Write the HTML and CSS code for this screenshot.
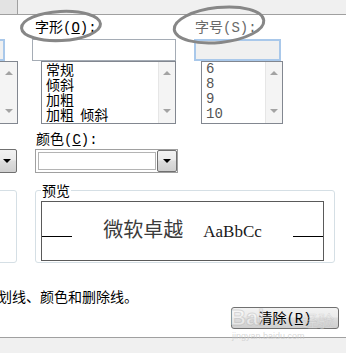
FILE: index.html
```html
<!DOCTYPE html>
<html lang="zh-CN">
<head>
    <meta charset="UTF-8">
    <title>字体</title>
    <link rel="stylesheet" href="styles.css">
</head>
<body>
    <div class="dialog">
        <div class="tabs"><div class="tab"></div></div>

        <div class="row labels">
            <span class="label style-label">字形<span class="key">(<u>O</u>):</span></span>
            <span class="label size-label">字号<span class="key">(S):</span></span>
        </div>

        <div class="row edits">
            <div class="edit edit-focus edit-cut"></div>
            <div class="edit edit-style"></div>
            <div class="edit edit-focus edit-size"></div>
        </div>

        <div class="row lists">
            <div class="list list-cut">
                <div class="scroll"><span class="arrow up"></span><span class="arrow down"></span></div>
            </div>
            <div class="list list-style">
                <ul class="items">
                    <li>常规</li>
                    <li>倾斜</li>
                    <li>加粗</li>
                    <li>加粗&nbsp;&nbsp;倾斜</li>
                </ul>
                <div class="scroll"><span class="arrow up"></span><span class="arrow down"></span></div>
            </div>
            <div class="list list-size">
                <ul class="items">
                    <li>6</li>
                    <li>8</li>
                    <li>9</li>
                    <li>10</li>
                </ul>
                <div class="scroll"><span class="arrow up"></span><span class="arrow down"></span></div>
            </div>
        </div>

        <div class="row color-row">
            <span class="label">颜色<span class="key">(<u>C</u>):</span></span>
        </div>

        <div class="row combos">
            <div class="combo combo-cut"><div class="drop"></div></div>
            <div class="combo combo-color"><div class="field"></div><div class="drop"></div></div>
        </div>

        <div class="row groups">
            <div class="group group-cut"></div>
            <fieldset class="group preview-group">
                <legend>预览</legend>
                <div class="preview">
                    <span class="rule"></span>
                    <span class="sample"><span class="sample-cn">微软卓越</span><span class="sample-en">AaBbCc</span></span>
                    <span class="rule"></span>
                </div>
            </fieldset>
        </div>

        <p class="note">划线、颜色和删除线。</p>

        <div class="row actions">
            <button class="btn">清除<span class="key">(<u>R</u>)</span></button>
            <div class="watermark">
                <span class="wm-big">Bai</span>
                <span class="wm-cn">经验</span>
                <span class="wm-url">jingyan.baidu.com</span>
            </div>
        </div>

        <div class="footer"></div>

        <!-- hand drawn marks over the two labels -->
        <svg class="marks" width="346" height="60" viewBox="0 0 346 60">
            <ellipse cx="61" cy="26" rx="39.5" ry="14.5" transform="rotate(-3 61 26)"/>
            <ellipse cx="219" cy="25" rx="45" ry="17.5" transform="rotate(-6 219 25)"/>
        </svg>
    </div>
</body>
</html>
```

FILE: styles.css
```css
body {
    margin: 0;
    background: #fff;
    font-family: "Noto Sans CJK SC", sans-serif;
    font-size: 14px;
    color: #000;
    overflow: hidden;
}
.dialog {
    position: relative;
    width: 346px;
    height: 353px;
    overflow: hidden;
}
.tabs {
    height: 14px;
    background: #f0f0f0;
    border-bottom: 1px solid #a0a0a0;
}
.tab {
    width: 17px;
    height: 14px;
    background: #e3e3e3;
    border-right: 1px solid #a0a0a0;
}
.row {
    display: flex;
}
.label {
    line-height: 18px;
    white-space: nowrap;
}
.key {
    font-family: "Liberation Mono", monospace;
}

/* labels */
.labels {
    height: 24px;
    align-items: center;
}
.style-label {
    margin-left: 35px;
    width: 160px;
}
.size-label {
    color: #6a6a6a;
}

/* edit boxes */
.edits {
    height: 22px;
}
.edit {
    box-sizing: border-box;
    height: 22px;
    border: 1px solid #a5acb5;
    background: #fff;
}
.edit-focus {
    border: 2px solid #a9c8ea;
    background: #f0f0f0;
}
.edit-cut {
    width: 5px;
    border-left: none;
}
.edit-style {
    margin-left: 27px;
    width: 144px;
}
.edit-size {
    margin-left: 18px;
    width: 87px;
}

/* list boxes */
.lists {
    height: 63px;
}
.list {
    box-sizing: border-box;
    height: 63px;
    display: flex;
    border: 1px solid #828790;
    background: #fff;
}
.list-cut {
    width: 18px;
    border-left: none;
}
.list-style {
    margin-left: 23px;
    width: 135px;
}
.list-size {
    margin-left: 25px;
    width: 82px;
}
.items {
    flex: 1;
    margin: 0;
    padding: 0 0 0 4px;
    list-style: none;
    line-height: 15px;
    white-space: nowrap;
}
.list-size .items {
    font-family: "Liberation Mono", monospace;
    color: #555;
}
.scroll {
    box-sizing: border-box;
    width: 17px;
    padding: 9px 0 10px;
    display: flex;
    flex-direction: column;
    justify-content: space-between;
    align-items: center;
    background: #f4f4f4;
    border-left: 1px solid #e6e6e6;
}
.list-cut .scroll {
    border-left: none;
}
.arrow {
    width: 0;
    height: 0;
    border-left: 4px solid transparent;
    border-right: 4px solid transparent;
}
.arrow.up {
    border-bottom: 4px solid #a3a3a3;
}
.arrow.down {
    border-top: 4px solid #a3a3a3;
}

/* colour */
.color-row {
    height: 25px;
    align-items: flex-end;
    padding-left: 36px;
}
.combos {
    height: 24px;
}
.combo {
    box-sizing: border-box;
    height: 24px;
    display: flex;
}
.combo-cut {
    width: 17px;
}
.combo-cut .drop {
    width: 20px;
    margin-left: -3px;
}
.combo-color {
    margin-left: 18px;
    width: 143px;
    border: 1px solid #a0a0a0;
    background: #fff;
}
.field {
    flex: 1;
    margin: 2px 1px 2px 2px;
    border: 1px solid #b4b4b4;
}
.drop {
    box-sizing: border-box;
    width: 20px;
    display: flex;
    align-items: center;
    justify-content: center;
    border: 1px solid #707070;
    border-radius: 2px;
    background: linear-gradient(#f2f2f2, #ebebeb 45%, #dddddd 50%, #cfcfcf);
}
.drop::after {
    content: "";
    border-left: 4px solid transparent;
    border-right: 4px solid transparent;
    border-top: 4px solid #000;
}

/* preview */
.groups {
    margin-top: 9px;
    align-items: flex-end;
}
.group {
    border: 1px solid #d5dfe5;
    border-radius: 3px;
}
.group-cut {
    box-sizing: border-box;
    width: 22px;
    height: 73px;
    margin-left: -5px;
}
.preview-group {
    margin: 0 0 0 18px;
    padding: 3px 10px 1px 5px;
    min-width: 0;
}
.preview-group legend {
    padding: 0 1px;
    line-height: 16px;
}
.preview {
    box-sizing: border-box;
    width: 283px;
    height: 60px;
    padding-top: 15px;
    display: flex;
    align-items: baseline;
    justify-content: space-between;
    border: 1px solid #5a5a5a;
}
.rule {
    width: 30px;
    height: 1px;
    background: #000;
}
.sample-cn {
    font-size: 20px;
    line-height: 24px;
    color: #3b3b3b;
}
.sample-en {
    margin-left: 20px;
    font-family: "Liberation Serif", serif;
    font-size: 17px;
    color: #1a1a1a;
}

.note {
    margin: 24px 0 0 -2px;
    line-height: 18px;
    white-space: nowrap;
}

/* button row */
.actions {
    position: relative;
    margin-top: 2px;
    justify-content: flex-end;
    padding-right: 7px;
}
.btn {
    width: 108px;
    height: 22px;
    padding: 0;
    font-family: inherit;
    font-size: 14px;
    line-height: 18px;
    color: #000;
    border: 1px solid #707070;
    border-radius: 3px;
    background: linear-gradient(#f2f2f2, #ebebeb 45%, #dddddd 50%, #cfcfcf);
}
.watermark {
    position: absolute;
    left: 230px;
    top: 0;
    width: 110px;
    height: 34px;
    pointer-events: none;
}
.wm-big {
    position: absolute;
    left: 0;
    top: -2px;
    font-family: "Liberation Sans", sans-serif;
    font-weight: bold;
    font-size: 22px;
    color: rgba(255, 255, 255, 0.45);
    -webkit-text-stroke: 1px rgba(160, 160, 160, 0.35);
}
.wm-cn {
    position: absolute;
    left: 72px;
    top: 1px;
    font-size: 16px;
    color: rgba(255, 255, 255, 0.4);
    -webkit-text-stroke: 0.6px rgba(160, 160, 160, 0.3);
}
.wm-url {
    position: absolute;
    left: 2px;
    top: 24px;
    font-family: "Liberation Sans", sans-serif;
    font-size: 9px;
    color: rgba(200, 200, 200, 0.7);
}

.footer {
    margin-top: 8px;
    height: 20px;
    background: #f0f0f0;
    border-top: 1px solid #a0a0a0;
}

.marks {
    position: absolute;
    left: 0;
    top: 0;
    pointer-events: none;
}
.marks ellipse {
    fill: none;
    stroke: #878787;
    stroke-width: 3;
}
```
